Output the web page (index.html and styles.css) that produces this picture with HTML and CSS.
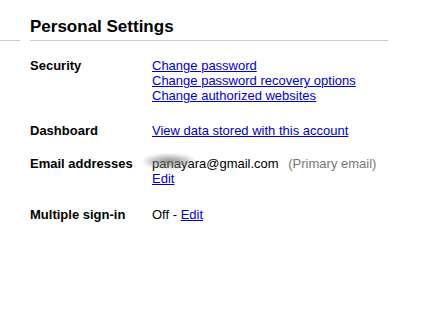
FILE: index.html
```html
<!DOCTYPE html>
<html lang="en">
<head>
    <meta charset="UTF-8">
    <title>Personal Settings</title>
    <link rel="stylesheet" href="styles.css">
</head>
<body>
    <div class="header">
        <div class="stub"></div>
        <h2 class="title">Personal Settings</h2>
    </div>
    <div class="settings">
        <div class="row">
            <div class="label">Security</div>
            <div class="value">
                <a href="#">Change password</a><br>
                <a href="#">Change password recovery options</a><br>
                <a href="#">Change authorized websites</a>
            </div>
        </div>
        <div class="row row-dash">
            <div class="label">Dashboard</div>
            <div class="value"><a href="#">View data stored with this account</a></div>
        </div>
        <div class="row row-email">
            <div class="label">Email addresses</div>
            <div class="value">
                <span class="email"><span class="smudge"></span>panayara@gmail.com</span>
                <span class="note">(Primary email)</span><br>
                <a href="#">Edit</a>
            </div>
        </div>
        <div class="row">
            <div class="label">Multiple sign-in</div>
            <div class="value">Off - <a href="#">Edit</a></div>
        </div>
    </div>
</body>
</html>
```

FILE: styles.css
```css
body {
    margin: 0;
    padding: 0;
    background-color: #fff;
    font-family: "Liberation Sans", Arial, sans-serif;
    font-size: 13px;
    color: #000;
}
.header {
    display: flex;
    align-items: flex-end;
    width: 388px;
}
.stub {
    width: 20px;
    border-bottom: 1px solid #ccc;
}
.title {
    flex: 1;
    margin: 17px 0 0 10px;
    padding-bottom: 3px;
    font-size: 17px;
    line-height: 20px;
    border-bottom: 1px solid #ccc;
}
.settings {
    padding: 17px 0 0 30px;
}
.row {
    display: flex;
    line-height: 15px;
    margin-bottom: 20px;
}
.row-dash {
    margin-bottom: 18px;
}
.row-email {
    margin-bottom: 21px;
}
.label {
    width: 122px;
    font-weight: bold;
}
.value a {
    color: #00c;
}
.email {
    position: relative;
}
/* blurred-out part of the address */
.smudge {
    position: absolute;
    left: -9px;
    top: -2px;
    width: 52px;
    height: 15px;
    background: radial-gradient(ellipse at center, rgba(110, 110, 110, 0.75) 0%, rgba(150, 150, 150, 0.4) 55%, rgba(255, 255, 255, 0) 75%);
    filter: blur(1.5px);
}
.note {
    margin-left: 6px;
    color: #777;
}
```
